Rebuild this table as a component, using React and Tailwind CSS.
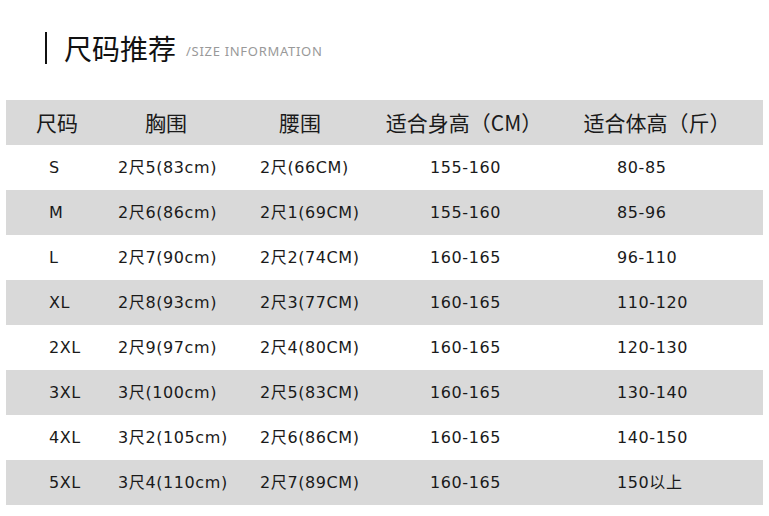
import React from 'react';

const ROWS = [
  ['S', '2尺5(83cm)', '2尺(66CM)', '155-160', '80-85'],
  ['M', '2尺6(86cm)', '2尺1(69CM)', '155-160', '85-96'],
  ['L', '2尺7(90cm)', '2尺2(74CM)', '160-165', '96-110'],
  ['XL', '2尺8(93cm)', '2尺3(77CM)', '160-165', '110-120'],
  ['2XL', '2尺9(97cm)', '2尺4(80CM)', '160-165', '120-130'],
  ['3XL', '3尺(100cm)', '2尺5(83CM)', '160-165', '130-140'],
  ['4XL', '3尺2(105cm)', '2尺6(86CM)', '160-165', '140-150'],
  ['5XL', '3尺4(110cm)', '2尺7(89CM)', '160-165', '150以上'],
];

const GRID = 'grid grid-cols-[102px_116px_152px_176px_210px]';
const CJK = "font-['Noto_Sans_CJK_SC',sans-serif]";
const DATA = "font-['DejaVu_Sans','Noto_Sans_CJK_SC',sans-serif]";

export default function App() {
  return (
    <div className="w-[769px] h-[516px] bg-white overflow-hidden text-[#1a1a1a]">
      {/* title */}
      <div className="flex items-center h-[100px] pl-[45px] pb-[4px]">
        <div className="w-[2px] h-[32px] bg-[#111]" />
        <span className={`${CJK} ml-[17px] text-[28px] leading-none text-[#111]`}>尺码推荐</span>
        <span className="font-['Noto_Sans',sans-serif] ml-[10px] mt-[8px] text-[13px] tracking-[0.7px] text-[#999]">/SIZE INFORMATION</span>
      </div>

      {/* table */}
      <div className="mx-[6px]">
        <div className={`${GRID} ${CJK} h-[45px] items-center bg-[#d9d9d9] text-[21px] whitespace-nowrap`}>
          <div className="text-center">尺码</div>
          <div className="text-center">胸围</div>
          <div className="text-center">腰围</div>
          <div className="text-center">适合身高（CM）</div>
          <div className="text-center">适合体高（斤）</div>
        </div>
        {ROWS.map((r, i) => (
          <div key={r[0]} className={`${GRID} ${DATA} h-[45px] items-center text-[16px] tracking-[0.6px] whitespace-nowrap ${i % 2 ? 'bg-[#d9d9d9]' : 'bg-white'}`}>
            <div className="pl-[43px]">{r[0]}</div>
            <div className="pl-[10px]">{r[1]}</div>
            <div className="pl-[36px]">{r[2]}</div>
            <div className="pl-[54px]">{r[3]}</div>
            <div className="pl-[65px]">{r[4]}</div>
          </div>
        ))}
      </div>
    </div>
  );
}
